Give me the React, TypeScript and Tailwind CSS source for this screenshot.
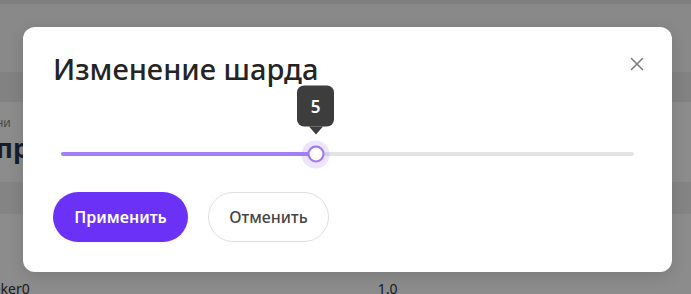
import React from 'react';

const font = { fontFamily: '"Noto Sans", Lato, sans-serif' };

const ShardSlider = ({ value, max }: { value: number; max: number }) => {
  const pct = (value / max) * 100;
  return (
    <div className="relative h-[30px] mx-2">
      <div className="absolute left-0 right-0 top-[13px] h-[4px] rounded-full bg-[#e4e4e4]" />
      <div
        className="absolute left-0 top-[13px] h-[4px] rounded-full bg-[#a47ef7]"
        style={{ width: `${pct}%` }}
      />
      <div
        className="absolute top-[15px] -translate-x-1/2 -translate-y-1/2"
        style={{ left: `${pct}%` }}
      >
        <div className="absolute left-1/2 top-1/2 w-[28px] h-[28px] -translate-x-1/2 -translate-y-1/2 rounded-full bg-[#a47ef7]/20" />
        <div className="relative w-[17px] h-[17px] rounded-full bg-white border-2 border-[#9e74f6]" />
        <div className="absolute left-1/2 bottom-[28px] -translate-x-1/2 flex flex-col items-center">
          <div className="w-[37px] h-[41px] rounded-[7px] bg-[#3d3d3d] flex items-center justify-center text-white text-[17px] font-semibold">
            {value}
          </div>
          <div className="w-0 h-0 border-x-[7px] border-x-transparent border-t-[8px] border-t-[#3d3d3d]" />
        </div>
      </div>
    </div>
  );
};

export default function App() {
  return (
    <div className="relative w-[691px] h-[294px] overflow-hidden bg-white" style={font}>
      {/* page behind the overlay */}
      <div className="flex flex-col">
        <div className="h-[4px] bg-[#e8e8e8]" />
        <div className="h-[68px] bg-[#f9f9f9]" />
        <div className="h-[30px] bg-[#ededed]" />
        <div className="h-[80px] pt-[14px] flex flex-col">
          <span className="text-[12px] text-[#888] leading-[14px] -ml-[4px]">ни</span>
          <span className="mt-[2px] text-[26px] font-bold text-[#26384d] -ml-[4px] leading-[32px]">пр</span>
        </div>
        <div className="h-[32px] bg-[#f1f1f1]" />
        <div className="h-[50px] flex items-center">
          <span className="text-[14px] text-[#1d6fd6] -ml-[6px]">l</span>
        </div>
        <div className="flex items-start h-[30px] pt-[14px] text-[14px] text-[#333]">
          <span className="-ml-[22px]">broker0</span>
          <span className="ml-[348px]">1.0</span>
        </div>
      </div>

      {/* overlay */}
      <div className="absolute inset-0 bg-black/45" />

      {/* modal */}
      <div className="absolute left-[23px] top-[27px] w-[649px] h-[245px] rounded-[12px] bg-white px-[30px] pt-[22px] shadow-[0_4px_16px_rgba(0,0,0,0.12)]">
        <div className="flex items-start justify-between">
          <h2 className="text-[29px] leading-[40px] font-medium text-[#242424]">
            Изменение шарда
          </h2>
          <button className="mt-[8px] -mr-[2px] text-[#7a7a7a]" aria-label="Закрыть">
            <svg width="14" height="14" viewBox="0 0 14 14" fill="none" stroke="currentColor" strokeWidth="1.5" strokeLinecap="round">
              <path d="M1.5 1.5l11 11M12.5 1.5l-11 11" />
            </svg>
          </button>
        </div>

        <div className="mt-[50px]">
          <ShardSlider value={5} max={11.25} />
        </div>

        <div className="mt-[23px] flex gap-[20px]">
          <button className="h-[50px] w-[135px] rounded-full bg-[#6c31f7] text-white text-[16px] font-semibold">
            Применить
          </button>
          <button className="h-[50px] w-[121px] rounded-full border border-[#dedede] text-[#454545] text-[16px] font-medium">
            Отменить
          </button>
        </div>
      </div>
    </div>
  );
}
